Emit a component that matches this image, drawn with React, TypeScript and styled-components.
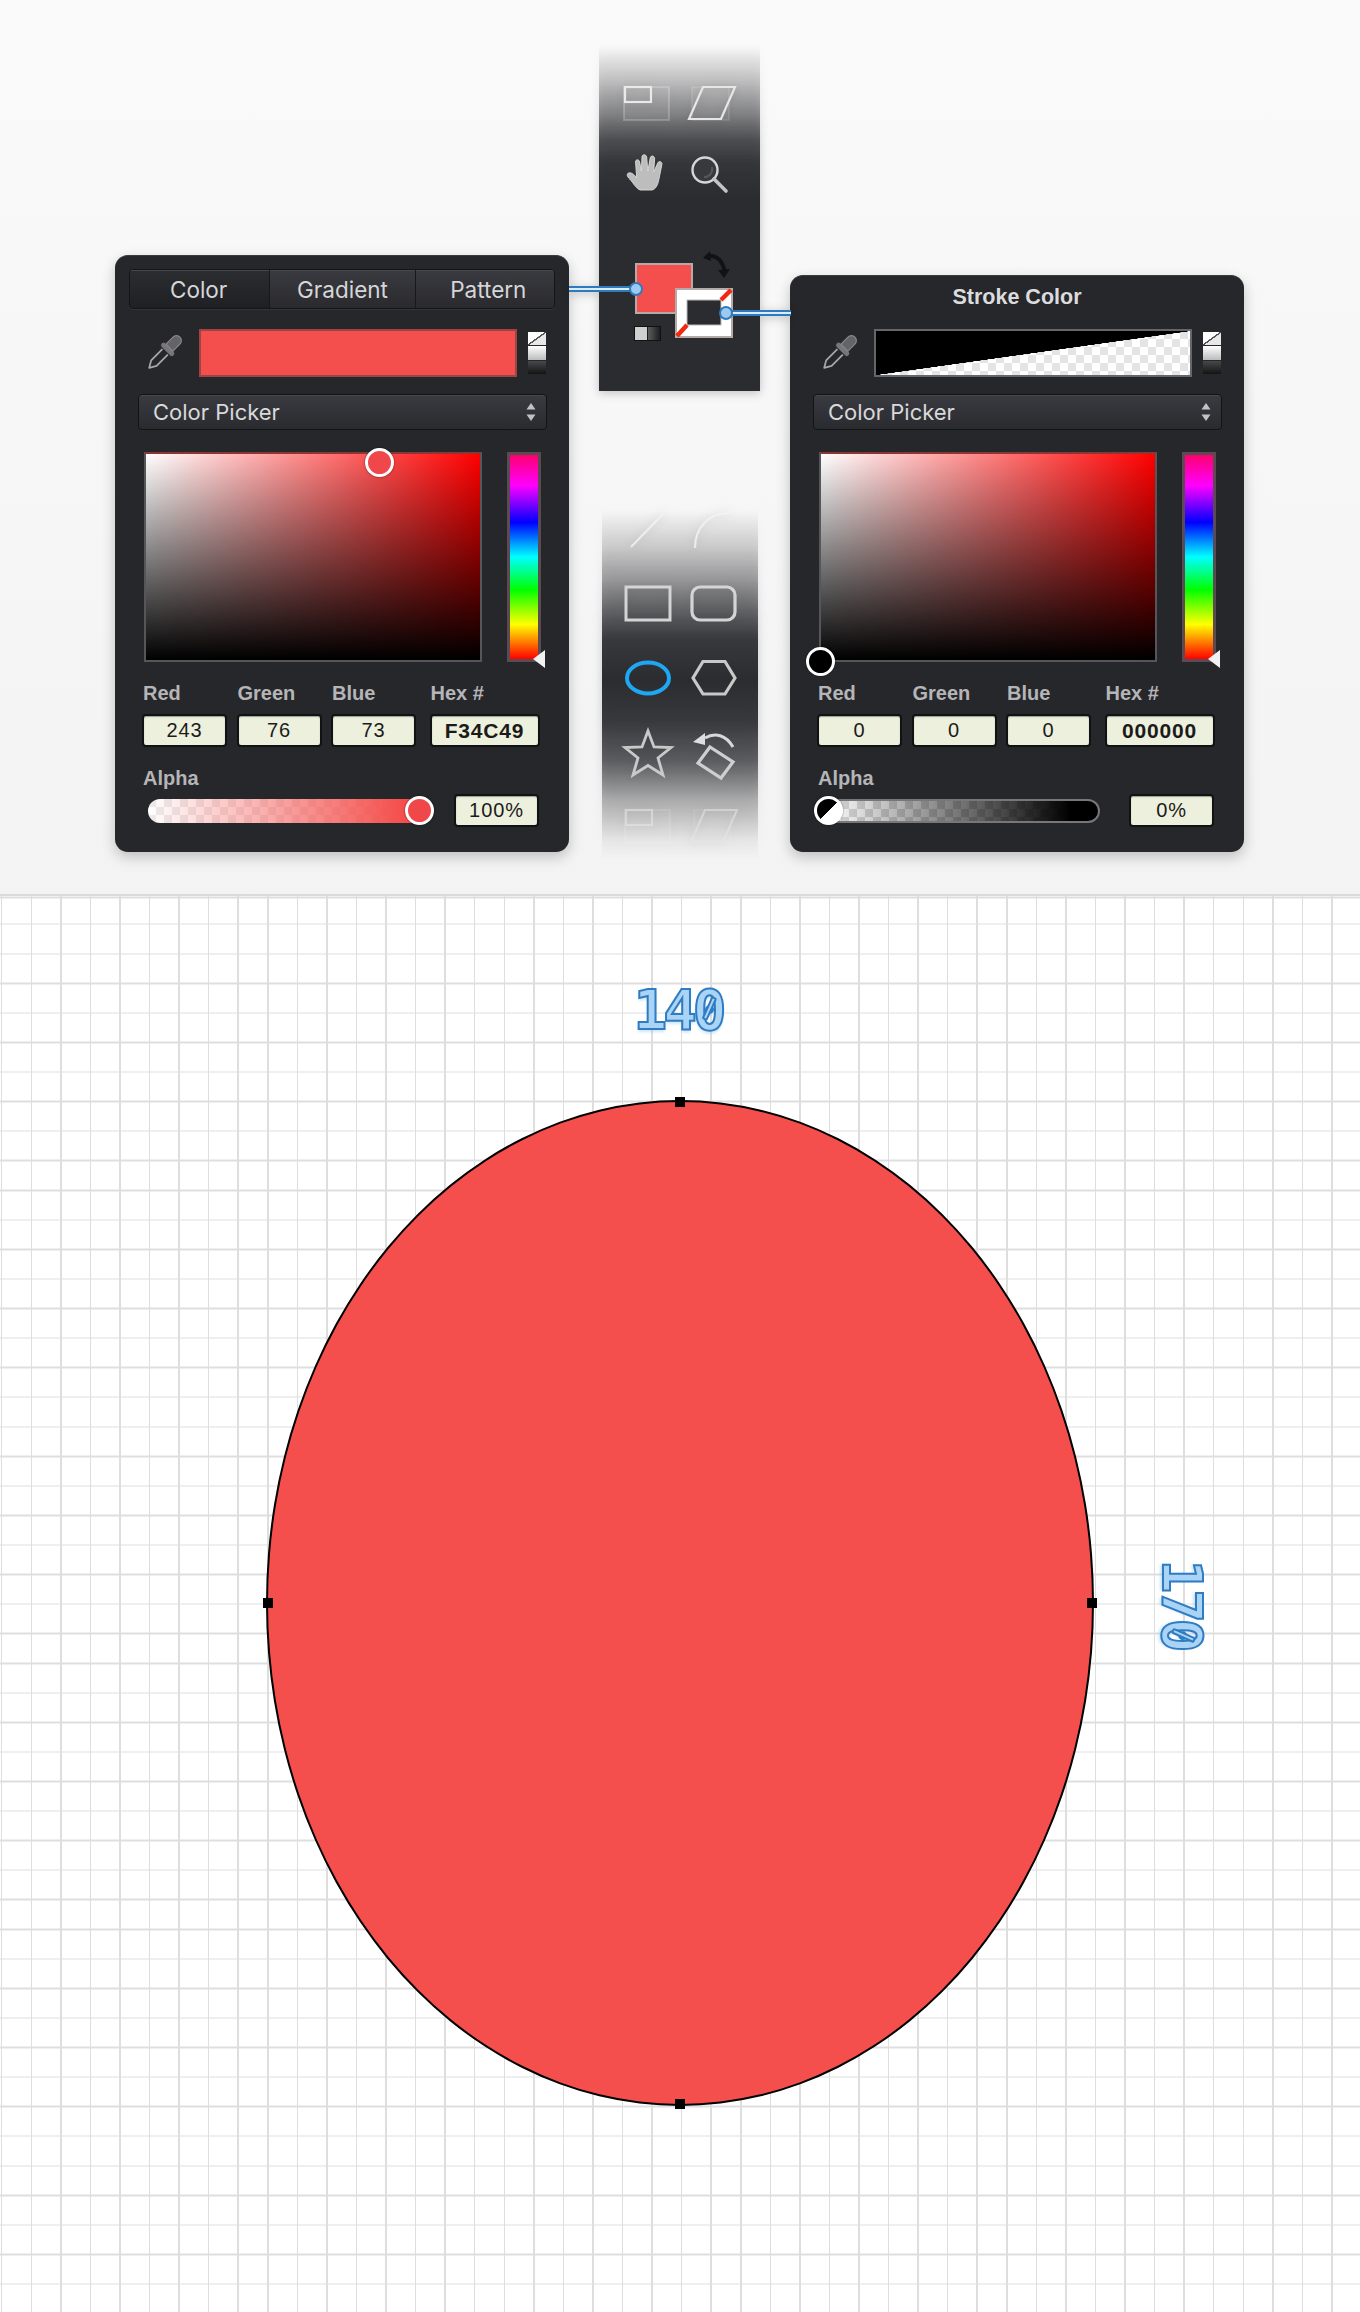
import React from "react";
import styled, { createGlobalStyle } from "styled-components";

const GlobalStyle = createGlobalStyle`
  html, body { margin: 0; padding: 0; background: #fff; }
  body { font-family: "Liberation Sans", Arial, sans-serif; }
`;

const checker = (a: string, b: string, size = 16) => `
  conic-gradient(${a} 25%, ${b} 25% 50%, ${a} 50% 75%, ${b} 75%) 0 0 / ${size}px ${size}px
`;

const Page = styled.div`
  width: 1360px;
  height: 2312px;
  overflow: hidden;
`;

const TopArea = styled.section`
  display: flex;
  gap: 30px;
  height: 894px;
  padding-left: 115px;
  box-sizing: border-box;
  background: linear-gradient(#fafafa, #f3f3f3);
`;

const Panel = styled.div<{ $top: number }>`
  width: 454px;
  height: ${(p) => 852 - p.$top}px;
  margin-top: ${(p) => p.$top}px;
  box-sizing: border-box;
  background: #26272b;
  border-top: 1px solid #3a3b3f;
  border-radius: 13px;
  box-shadow: 0 5px 14px rgba(0, 0, 0, 0.22);
  position: relative;
  z-index: 1;
`;

const Tabs = styled.div`
  display: flex;
  height: 40px;
  margin: 13px 14px 20px;
  border-radius: 4px;
  overflow: hidden;
  border: 1px solid #141518;
  box-sizing: border-box;
  box-shadow: 0 1px 0 #34353a;
`;

const Tab = styled.div<{ $active?: boolean; $w: number }>`
  width: ${(p) => p.$w}px;
  display: flex;
  align-items: center;
  justify-content: center;
  box-sizing: border-box;
  padding-right: ${(p) => (p.$active ? 2 : 0)}px;
  font: 22.5px Inter, "Liberation Sans", sans-serif;
  color: #d6d6d8;
  border-right: 1px solid #17181b;
  box-shadow: inset 0 1px 0 #47484d;
  background: ${(p) =>
    p.$active
      ? "linear-gradient(#2c2d31, #1f2024)"
      : "linear-gradient(#3a3b40, #29292e)"};
  &:last-child { border-right: 0; padding-left: 7px; }
`;

const Title = styled.div`
  height: 53px;
  display: flex;
  align-items: center;
  justify-content: center;
  padding-bottom: 10px;
  box-sizing: border-box;
  font-size: 21.5px;
  font-weight: 700;
  color: #dcdcde;
`;

const SwatchRow = styled.div`
  display: flex;
  align-items: center;
  height: 48px;
  padding-left: 27px;
`;

const Dropper = styled.svg`
  width: 44px;
  height: 44px;
  margin-right: 13px;
  flex: none;
`;

const BigSwatch = styled.div<{ $stroke?: boolean }>`
  width: 318px;
  height: 48px;
  box-sizing: border-box;
  border: 2px solid ${(p) => (p.$stroke ? "#66666a" : "#9c4543")};
  background: ${(p) =>
    p.$stroke
      ? `linear-gradient(to bottom right, #000 50%, transparent 50.3%), ${checker("#fff", "#e4e4e4")}`
      : "#f44f4c"};
`;

const MiniStack = styled.div`
  margin-left: 11px;
  width: 18px;
  display: flex;
  flex-direction: column;
  gap: 1px;
  height: 42px;
`;

const MiniNone = styled.div`
  flex: 1;
  background: linear-gradient(to bottom right, #fff 46%, #555 47% 53%, #e8e8e8 54%);
`;

const MiniLight = styled.div`
  flex: 1;
  background: linear-gradient(#fff, #bbb);
`;

const MiniDark = styled.div`
  flex: 1;
  background: linear-gradient(#48494c, #131313);
`;

const Select = styled.div`
  display: flex;
  align-items: center;
  justify-content: space-between;
  height: 36px;
  margin: 17px 22px 0 23px;
  padding: 0 10px 0 14px;
  box-sizing: border-box;
  border: 1px solid #121316;
  border-radius: 4px;
  background: linear-gradient(#3a3b40, #2a2b2f);
  box-shadow: inset 0 1px 0 #47484d;
  font: 22px Inter, "Liberation Sans", sans-serif;
  color: #d9d9db;
`;

const Stepper = styled.svg`
  width: 10px;
  height: 20px;
`;

const PickerRow = styled.div`
  display: flex;
  gap: 25px;
  height: 210px;
  margin: 22px 0 0 29px;
  position: relative;
`;

const ColorField = styled.div`
  width: 338px;
  height: 210px;
  box-sizing: border-box;
  border: 2px solid #56565a;
  border-top-color: #8a3634;
  background:
    linear-gradient(to top, #000, rgba(0, 0, 0, 0)),
    linear-gradient(to right, #fff, #f00);
  position: relative;
`;

const Knob = styled.div<{ $x: number; $y: number; $fill: string }>`
  position: absolute;
  left: ${(p) => p.$x}px;
  top: ${(p) => p.$y}px;
  width: 29px;
  height: 29px;
  margin: -14.5px 0 0 -14.5px;
  box-sizing: border-box;
  border-radius: 50%;
  border: 3px solid #fff;
  background: ${(p) => p.$fill};
  box-shadow: 0 0 2px rgba(0, 0, 0, 0.6);
  z-index: 2;
`;

const HueBar = styled.div`
  width: 34px;
  height: 210px;
  box-sizing: border-box;
  border: 3px solid #5b4a52;
  background: linear-gradient(
    #ff0070 0,
    #f0f 15%,
    #00f 33%,
    #0ff 50%,
    #0f0 66%,
    #ff0 83%,
    #f00 100%
  );
`;

const HueMark = styled.div`
  position: absolute;
  left: 389px;
  bottom: -6px;
  width: 0;
  height: 0;
  border-top: 9px solid transparent;
  border-bottom: 9px solid transparent;
  border-right: 12px solid #f2f2f2;
`;

const ValueRow = styled.div`
  display: grid;
  grid-template-columns: 85px 85px 85px 110px;
  column-gap: 9.5px;
  margin: 19px 0 0 27px;
  width: 397px;
  > div:last-child { margin-left: 4px; }
`;

const ValueCol = styled.div``;

const Label = styled.div`
  height: 24px;
  line-height: 24px;
  padding-left: 1px;
  font-size: 20px;
  font-weight: 700;
  color: #b5b5b7;
`;

const Field = styled.div<{ $bold?: boolean; $w?: number }>`
  width: ${(p) => p.$w ?? 85}px;
  height: 33px;
  margin-top: 9px;
  box-sizing: border-box;
  display: flex;
  align-items: center;
  justify-content: center;
  border: 2px solid #111214;
  border-radius: 4px;
  background: #edf0dc;
  box-shadow: inset 0 1px 1px rgba(0, 0, 0, 0.35);
  font-size: ${(p) => (p.$bold ? 21 : 20)}px;
  font-weight: ${(p) => (p.$bold ? 700 : 400)};
  letter-spacing: ${(p) => (p.$bold ? 0.8 : 0.9)}px;
  color: #1b1b1b;
`;

const AlphaLabel = styled(Label)`
  margin: 19px 0 0 27px;
`;

const AlphaRow = styled.div`
  display: flex;
  align-items: center;
  height: 33px;
  margin: 4px 0 0 33px;
  ${Field} { margin: 0 0 0 29px; }
`;

const AlphaTrack = styled.div<{ $dark?: boolean }>`
  width: 277px;
  height: 24px;
  box-sizing: border-box;
  border-radius: 12px;
  position: relative;
  ${(p) =>
    p.$dark
      ? `border: 2px solid #77777a;
         background: linear-gradient(to right, rgba(0,0,0,0) 0, rgba(0,0,0,.6) 55%, #000 90%), ${checker("#fff", "#dcdcdc")};`
      : `background: linear-gradient(to right, rgba(244,79,76,0) 0, #f44f4c 92%), ${checker("#fff", "#ececec")};`}
`;

const SplitKnob = styled(Knob)`
  background: linear-gradient(135deg, #000 50%, #fff 50%);
`;

const ToolColumn = styled.div`
  width: 161px;
  flex: none;
  display: flex;
  flex-direction: column;
  position: relative;
  z-index: 2;
`;

const TopStrip = styled.div`
  width: 161px;
  height: 346px;
  margin-top: 45px;
  background: linear-gradient(
    rgba(43, 44, 48, 0) 0,
    rgba(43, 44, 48, 0.24) 35px,
    rgba(43, 44, 48, 0.51) 68px,
    rgba(43, 44, 48, 0.8) 95px,
    rgba(43, 44, 48, 0.94) 118px,
    #2b2c30 152px
  );
  filter: drop-shadow(0 2px 5px rgba(0, 0, 0, 0.22));
`;

const BottomStrip = styled.div`
  width: 156px;
  height: 350px;
  margin: 119px 0 0 3px;
  overflow: hidden;
  background: linear-gradient(
    rgba(43, 44, 48, 0) 0,
    rgba(43, 44, 48, 0.18) 36px,
    rgba(43, 44, 48, 0.42) 70px,
    rgba(43, 44, 48, 0.77) 110px,
    rgba(43, 44, 48, 0.93) 130px,
    #2b2c30 170px,
    rgba(43, 44, 48, 0.93) 210px,
    rgba(43, 44, 48, 0.72) 250px,
    rgba(43, 44, 48, 0.32) 290px,
    rgba(43, 44, 48, 0.06) 330px,
    rgba(43, 44, 48, 0) 350px
  );
  filter: drop-shadow(0 0 5px rgba(0, 0, 0, 0.18));
`;

const TopIcons = styled.div`
  display: grid;
  grid-template-columns: 48px 48px;
  grid-auto-rows: 36px;
  column-gap: 17px;
  row-gap: 33px;
  padding: 38px 0 0 24px;
`;

const BottomIcons = styled.div`
  display: grid;
  grid-template-columns: 48px 48px;
  grid-auto-rows: 40px;
  column-gap: 18px;
  row-gap: 34px;
  padding-left: 22px;
`;

const ToolIcon = styled.svg<{ $faded?: boolean }>`
  width: 48px;
  height: 40px;
  overflow: visible;
  opacity: ${(p) => (p.$faded ? 0.55 : 1)};
`;

const SwatchArea = styled.div`
  position: relative;
  height: 90px;
  margin-top: 62px;
`;

const FillChip = styled.div`
  position: absolute;
  left: 36px;
  top: 13px;
  width: 58px;
  height: 51px;
  box-sizing: border-box;
  border: 2px solid #b4aaa8;
  background: #f44f4c;
`;

const StrokeChip = styled.svg`
  position: absolute;
  left: 76px;
  top: 38px;
  width: 58px;
  height: 50px;
`;

const SwapIcon = styled.svg`
  position: absolute;
  left: 103px;
  top: 0;
  width: 30px;
  height: 30px;
`;

const DefaultChip = styled.div`
  position: absolute;
  left: 36px;
  top: 77px;
  width: 25px;
  height: 13px;
  background: linear-gradient(to right, #d0d0d0 0 50%, #1b1b1d 50% 54%, #5a5a5c 54%, #1d1d1f);
  box-shadow: 0 0 0 1px #111;
`;

const Connector = styled.div<{ $left: number; $top: number; $w: number }>`
  position: absolute;
  left: ${(p) => p.$left}px;
  top: ${(p) => p.$top - 3}px;
  width: ${(p) => p.$w}px;
  height: 6px;
  box-sizing: border-box;
  background: #d9ecfb;
  border-top: 2px solid #2f79bd;
  border-bottom: 2px solid #2f79bd;
`;

const ConnectorDot = styled.div<{ $left: number; $top: number }>`
  position: absolute;
  left: ${(p) => p.$left - 7}px;
  top: ${(p) => p.$top - 7}px;
  width: 14px;
  height: 14px;
  box-sizing: border-box;
  border-radius: 50%;
  background: #9cc9f0;
  border: 2px solid #2f79bd;
`;

const Canvas = styled.section`
  position: relative;
  height: 1418px;
  padding-top: 204px;
  box-sizing: border-box;
  border-top: 2px solid #dadada;
  background-color: #fff;
  background-image:
    repeating-linear-gradient(to right, #dedede 0 1.5px, transparent 1.5px 29.56px),
    repeating-linear-gradient(to bottom, #dedede 0 1.5px, transparent 1.5px 29.56px);
  background-position: 1px 0, 0 27.5px;
`;

const Ellipse = styled.div`
  position: relative;
  width: 828px;
  height: 1006px;
  margin-left: 266px;
  box-sizing: border-box;
  border: 2px solid #000;
  border-radius: 50%;
  background: #f44f4c;
`;

const Handle = styled.div<{ $x: string; $y: string }>`
  position: absolute;
  left: ${(p) => p.$x};
  top: ${(p) => p.$y};
  width: 10px;
  height: 10px;
  margin: -5px 0 0 -5px;
  background: #000;
`;

const Dimension = styled.div<{ $x: number; $y: number; $vertical?: boolean }>`
  position: absolute;
  left: ${(p) => p.$x}px;
  top: ${(p) => p.$y}px;
  transform: translate(-50%, -50%) ${(p) => (p.$vertical ? "rotate(90deg)" : "")};
  font: 700 56px "DejaVu Sans Mono", monospace;
  letter-spacing: -4px;
  line-height: 1;
  color: #a9d4f6;
  -webkit-text-stroke: 2px #2f7cc2;
  text-shadow: 0 3px 3px rgba(120, 180, 235, 0.35);
`;

/* the font's zero has a dot, the reference's has a slash: a bar lies over the dot */
const SlashedZero = styled.span`
  position: relative;
  display: inline-block;
  &::after {
    content: "";
    position: absolute;
    left: 14px;
    top: 14px;
    width: 6px;
    height: 25px;
    box-sizing: border-box;
    background: #a9d4f6;
    border: 2px solid #2f7cc2;
    border-radius: 2px;
    transform: rotate(24deg);
  }
`;

const DropperIcon = () => (
  <Dropper viewBox="0 0 40 40">
    <g transform="rotate(45 20 20)" strokeLinejoin="round">
      <path d="M16.500 17 L16.500 33 L20 39 L23.500 33 L23.500 17" fill="#26272b" stroke="#a8a8aa" strokeWidth="1.600" />
      <rect x="12" y="12.500" width="16" height="5.500" rx="2.700" fill="#77777a" stroke="#2b2b2d" />
      <path d="M15.500 13 V4 a4.500 4.500 0 0 1 9 0 V13 Z" fill="#646467" stroke="#8a8a8c" strokeWidth="1" />
    </g>
  </Dropper>
);

const SelectArrows = () => (
  <Stepper viewBox="0 0 10 20">
    <path d="M5 1 L9.500 7.500 H0.500 Z M5 19 L9.500 12.500 H0.500 Z" fill="#c2c2c4" />
  </Stepper>
);

const FreeTransform = ({ faded }: { faded?: boolean }) => (
  <ToolIcon viewBox="0 0 48 40" $faded={faded}>
    <rect x="1" y="4" width="45" height="33" fill="rgba(255,255,255,.06)" stroke="rgba(255,255,255,.2)" strokeWidth="2" />
    <rect x="2" y="4" width="26" height="15" fill="none" stroke="#e9e9e9" strokeWidth="2.200" />
  </ToolIcon>
);

const Skew = ({ faded }: { faded?: boolean }) => (
  <ToolIcon viewBox="0 0 48 40" $faded={faded}>
    <rect x="4" y="4" width="37" height="33" fill="rgba(255,255,255,.06)" stroke="rgba(255,255,255,.14)" strokeWidth="1.500" />
    <path d="M15 4 H47 L33 36 H1 Z" fill="none" stroke="#e6e6e6" strokeWidth="2.200" />
  </ToolIcon>
);

const Hand = () => (
  <ToolIcon viewBox="0 0 48 40">
    <path
      transform="translate(-5 0) scale(1.17 1)"
      d="M9 21 C12 20 15 24 16 26 L15 10 C15 7 18 7 18.500 10 L20 19 L20.500 5 C20.500 2 24 2 24.500 5 L25.500 19 L27.500 6 C28 3 31.500 3.500 31.300 7 L30.500 20 L34 11 C35 8.500 38 9.500 37.500 12.500 L35 27 C34 33 32.500 37 29 38 L19 38 C16 37 13 31 10 27 C8 25 7 22 9 21 Z"
      fill="#bdbdbd"
      stroke="#dedede"
      strokeWidth="0.800"
    />
  </ToolIcon>
);

const Magnifier = () => (
  <ToolIcon viewBox="0 0 48 40">
    <circle cx="17" cy="18" r="12.500" fill="#38393d" stroke="#d6d6d6" strokeWidth="2.400" />
    <path d="M26 27 L38 39" stroke="#c4c4c4" strokeWidth="3.600" strokeLinecap="round" />
    <path d="M24 15 A8 8 0 0 1 16 25" fill="none" stroke="#56575b" strokeWidth="2" />
  </ToolIcon>
);

const LineTool = () => (
  <ToolIcon viewBox="0 0 48 40">
    <path d="M7 37 L40 3" stroke="#f2f2f2" strokeWidth="2.200" strokeOpacity="0.8" />
  </ToolIcon>
);

const CurveTool = () => (
  <ToolIcon viewBox="0 0 48 40">
    <path d="M5 38 C5 20 16 3 40 3" fill="none" stroke="#f2f2f2" strokeWidth="2.200" strokeOpacity="0.8" />
  </ToolIcon>
);

const RectTool = () => (
  <ToolIcon viewBox="0 0 48 40">
    <rect x="2" y="3" width="44" height="33" fill="rgba(0,0,0,.06)" stroke="#d4d4d4" strokeWidth="3" />
  </ToolIcon>
);

const RoundRectTool = () => (
  <ToolIcon viewBox="0 0 48 40">
    <rect x="2" y="3" width="43" height="33" rx="8" fill="rgba(0,0,0,.06)" stroke="#d4d4d4" strokeWidth="3.200" />
  </ToolIcon>
);

const EllipseTool = () => (
  <ToolIcon viewBox="0 0 48 40">
    <ellipse cx="24" cy="20" rx="21" ry="15.500" fill="none" stroke="#1ea7f3" strokeWidth="4" />
  </ToolIcon>
);

const HexagonTool = () => (
  <ToolIcon viewBox="0 0 48 40">
    <path d="M13 3.500 H35 L45 20 L35 36 H13 L3 20 Z" fill="none" stroke="#c8c8c8" strokeWidth="3.200" />
  </ToolIcon>
);

const StarTool = () => (
  <ToolIcon viewBox="0 0 48 40">
    <path
      d="M24 -1 L30 15 L47 15.500 L34 26 L39 43 L24 33.500 L9 43 L14 26 L1 15.500 L18 15 Z"
      fill="rgba(0,0,0,.08)"
      stroke="#c9c9c9"
      strokeWidth="2.800"
      strokeLinejoin="miter"
    />
  </ToolIcon>
);

const RotateTool = () => (
  <ToolIcon viewBox="0 0 48 40">
    <path d="M15 6 C25 0 36 3 43 15" fill="none" stroke="#d8d8d8" strokeWidth="3" />
    <path d="M3 10 L15 1 L15 13 Z" fill="#dedede" />
    <path d="M20 15 L43 30 L31 46 L8 31 Z" fill="none" stroke="#cfcfcf" strokeWidth="3.200" />
  </ToolIcon>
);

const fields = [
  { label: "Red", w: 85 },
  { label: "Green", w: 85 },
  { label: "Blue", w: 85 },
  { label: "Hex #", w: 110 },
];

type PanelBodyProps = {
  stroke?: boolean;
  values: string[];
  alpha: string;
};

const PanelBody = ({ stroke, values, alpha }: PanelBodyProps) => (
  <>
    <SwatchRow>
      <DropperIcon />
      <BigSwatch $stroke={stroke} />
      <MiniStack>
        <MiniNone />
        <MiniLight />
        <MiniDark />
      </MiniStack>
    </SwatchRow>
    <Select>
      Color Picker
      <SelectArrows />
    </Select>
    <PickerRow>
      <ColorField />
      {stroke ? <Knob $x={1} $y={209} $fill="#000" /> : <Knob $x={235} $y={10} $fill="#f0474a" />}
      <HueBar />
      <HueMark />
    </PickerRow>
    <ValueRow>
      {fields.map((f, i) => (
        <ValueCol key={f.label}>
          <Label>{f.label}</Label>
          <Field $w={f.w} $bold={i === 3}>
            {values[i]}
          </Field>
        </ValueCol>
      ))}
    </ValueRow>
    <AlphaLabel>Alpha</AlphaLabel>
    <AlphaRow>
      <AlphaTrack $dark={stroke}>
        {stroke ? (
          <SplitKnob $x={3} $y={10} $fill="#000" />
        ) : (
          <Knob $x={271} $y={12} $fill="#f0474a" />
        )}
      </AlphaTrack>
      <Field>{alpha}</Field>
    </AlphaRow>
  </>
);

const App = () => {
  return (
    <Page>
      <GlobalStyle />
      <TopArea>
        <Panel $top={255}>
          <Tabs>
            <Tab $active $w={141}>Color</Tab>
            <Tab $w={146}>Gradient</Tab>
            <Tab $w={139}>Pattern</Tab>
          </Tabs>
          <PanelBody values={["243", "76", "73", "F34C49"]} alpha="100%" />
        </Panel>

        <ToolColumn>
          <TopStrip>
            <TopIcons>
              <FreeTransform />
              <Skew />
              <Hand />
              <Magnifier />
            </TopIcons>
            <SwatchArea>
              <Connector $left={-30} $top={39} $w={66} />
              <FillChip />
              <StrokeChip viewBox="0 0 58 50">
                <rect x="1" y="1" width="56" height="48" fill="#fff" stroke="#b4aaa8" strokeWidth="2" />
                <rect x="12" y="12" width="34" height="25" fill="#2b2c30" stroke="#b9b9b9" strokeWidth="1" />
                <path d="M2 48 L12 37 M46 12 L56 2" stroke="#f02a10" strokeWidth="4.500" />
              </StrokeChip>
              <SwapIcon viewBox="0 0 30 30">
                <path d="M4 7 C12 4 20 8 23 22" fill="none" stroke="#111214" strokeWidth="4" />
                <path d="M1 8 L8 1 L9 11 Z M16 20 L28 19 L22 28 Z" fill="#111214" />
              </SwapIcon>
              <DefaultChip />
              <Connector $left={132} $top={63} $w={60} />
              <ConnectorDot $left={37} $top={39} />
              <ConnectorDot $left={127} $top={63} />
            </SwatchArea>
          </TopStrip>
          <BottomStrip>
            <BottomIcons>
              <LineTool />
              <CurveTool />
              <RectTool />
              <RoundRectTool />
              <EllipseTool />
              <HexagonTool />
              <StarTool />
              <RotateTool />
              <FreeTransform faded />
              <Skew faded />
            </BottomIcons>
          </BottomStrip>
        </ToolColumn>

        <Panel $top={275}>
          <Title>Stroke Color</Title>
          <PanelBody stroke values={["0", "0", "0", "000000"]} alpha="0%" />
        </Panel>
      </TopArea>

      <Canvas>
        <Dimension $x={678} $y={114}>14<SlashedZero>0</SlashedZero></Dimension>
        <Dimension $x={1182} $y={708} $vertical>17<SlashedZero>0</SlashedZero></Dimension>
        <Ellipse>
          <Handle $x="50%" $y="0" />
          <Handle $x="50%" $y="100%" />
          <Handle $x="0" $y="50%" />
          <Handle $x="100%" $y="50%" />
        </Ellipse>
      </Canvas>
    </Page>
  );
};

export default App;
